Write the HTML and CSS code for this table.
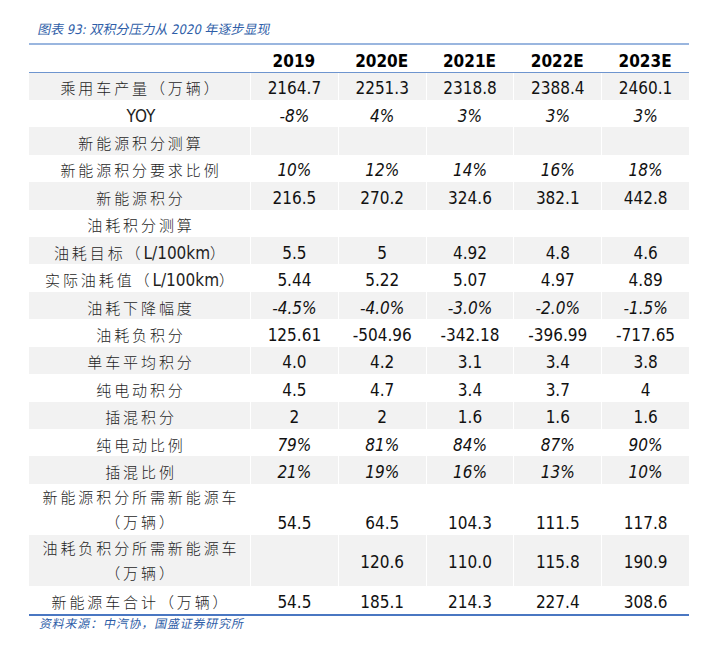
FILE: index.html
```html
<!DOCTYPE html>
<html lang="zh-CN">
<head>
<meta charset="utf-8">
<title>双积分压力从 2020 年逐步显现</title>
<link rel="stylesheet" href="styles.css">
</head>
<body>
<div class="page">
  <p class="title"><span class="slant">图表 93: 双积分压力从 2020 年逐步显现</span></p>
  <table class="data">
    <colgroup>
      <col class="label-col">
      <col class="num-col"><col class="num-col"><col class="num-col"><col class="num-col"><col class="num-col">
    </colgroup>
    <thead>
      <tr class="head">
        <th></th><th>2019</th><th>2020E</th><th>2021E</th><th>2022E</th><th>2023E</th>
      </tr>
    </thead>
    <tbody>
      <tr class="row alt"><td class="lbl">乘用车产量（万辆）</td><td>2164.7</td><td>2251.3</td><td>2318.8</td><td>2388.4</td><td>2460.1</td></tr>
      <tr class="row"><td class="lbl"><span class="lat">YOY</span></td><td class="it">-8%</td><td class="it">4%</td><td class="it">3%</td><td class="it">3%</td><td class="it">3%</td></tr>
      <tr class="row alt"><td class="lbl">新能源积分测算</td><td></td><td></td><td></td><td></td><td></td></tr>
      <tr class="row"><td class="lbl">新能源积分要求比例</td><td class="it">10%</td><td class="it">12%</td><td class="it">14%</td><td class="it">16%</td><td class="it">18%</td></tr>
      <tr class="row alt"><td class="lbl">新能源积分</td><td>216.5</td><td>270.2</td><td>324.6</td><td>382.1</td><td>442.8</td></tr>
      <tr class="row"><td class="lbl">油耗积分测算</td><td></td><td></td><td></td><td></td><td></td></tr>
      <tr class="row alt"><td class="lbl">油耗目标（<span class="lat">L/100km</span>）</td><td>5.5</td><td>5</td><td>4.92</td><td>4.8</td><td>4.6</td></tr>
      <tr class="row"><td class="lbl">实际油耗值（<span class="lat">L/100km</span>）</td><td>5.44</td><td>5.22</td><td>5.07</td><td>4.97</td><td>4.89</td></tr>
      <tr class="row alt"><td class="lbl">油耗下降幅度</td><td class="it">-4.5%</td><td class="it">-4.0%</td><td class="it">-3.0%</td><td class="it">-2.0%</td><td class="it">-1.5%</td></tr>
      <tr class="row"><td class="lbl">油耗负积分</td><td>125.61</td><td>-504.96</td><td>-342.18</td><td>-396.99</td><td>-717.65</td></tr>
      <tr class="row alt"><td class="lbl">单车平均积分</td><td>4.0</td><td>4.2</td><td>3.1</td><td>3.4</td><td>3.8</td></tr>
      <tr class="row"><td class="lbl">纯电动积分</td><td>4.5</td><td>4.7</td><td>3.4</td><td>3.7</td><td>4</td></tr>
      <tr class="row alt"><td class="lbl">插混积分</td><td>2</td><td>2</td><td>1.6</td><td>1.6</td><td>1.6</td></tr>
      <tr class="row"><td class="lbl">纯电动比例</td><td class="it">79%</td><td class="it">81%</td><td class="it">84%</td><td class="it">87%</td><td class="it">90%</td></tr>
      <tr class="row alt"><td class="lbl">插混比例</td><td class="it">21%</td><td class="it">19%</td><td class="it">16%</td><td class="it">13%</td><td class="it">10%</td></tr>
      <tr class="dbl dbl-a"><td class="lbl">新能源积分所需新能源车<br>（万辆）</td><td class="bottom">54.5</td><td class="bottom">64.5</td><td class="bottom">104.3</td><td class="bottom">111.5</td><td class="bottom">117.8</td></tr>
      <tr class="dbl dbl-b alt"><td class="lbl">油耗负积分所需新能源车<br>（万辆）</td><td></td><td>120.6</td><td>110.0</td><td>115.8</td><td>190.9</td></tr>
      <tr class="last"><td class="lbl">新能源车合计（万辆）</td><td>54.5</td><td>185.1</td><td>214.3</td><td>227.4</td><td>308.6</td></tr>
    </tbody>
  </table>
  <p class="source"><span class="slant">资料来源：中汽协，国盛证券研究所</span></p>
</div>
</body>
</html>
```
FILE: styles.css
```css
* {
  box-sizing: border-box;
}

body {
  margin: 0;
  background: #ffffff;
  color: #111111;
  font-family: "DejaVu Sans Condensed", "Noto Sans CJK SC", sans-serif;
}

.page {
  width: 704px;
  padding-left: 29px;
}

.title {
  margin: 0 0 0 9px;
  padding-top: 22px;
  height: 38px;
  line-height: 16px;
  font-size: 13px;
  color: #2f5ea8;
  font-family: "DejaVu Sans Condensed", "Noto Sans CJK SC", sans-serif;
}

.slant {
  display: inline-block;
  transform: skewX(-12deg);
  transform-origin: left center;
}

.data {
  width: 660px;
  margin-top: 5px;
  table-layout: fixed;
  border-collapse: separate;
  border-spacing: 0;
  border-top: 2px solid #9ab6df;
  border-bottom: 2px solid #4a77c2;
  font-size: 17px;
}

.label-col {
  width: 221px;
}

.num-col {
  width: 87.8px;
}

.head {
  height: 27.5px;
}

.head th {
  border-bottom: 1.5px solid #6e95cf;
  font-weight: bold;
  line-height: 20px;
  padding: 6px 0 0 0;
  vertical-align: middle;
  text-align: center;
  color: #000;
}

td {
  padding: 4px 0 0 0;
  line-height: 20px;
  text-align: center;
  vertical-align: middle;
  white-space: nowrap;
  color: #111;
  border-left: 1px solid #ffffff;
}

td.lbl {
  border-left: 0;
  font-family: "Noto Sans CJK SC", sans-serif;
  font-weight: 300;
  font-size: 15px;
  letter-spacing: 2.9px;
  padding-left: 3px;
  color: #1e1e1e;
}

.lat {
  font-family: "DejaVu Sans Condensed", sans-serif;
  font-weight: 400;
  font-size: 17px;
  letter-spacing: 0;
}

.row {
  height: 27.43px;
}

.alt td {
  background: #f2f2f2;
}

.it {
  font-style: italic;
}

.dbl-a {
  height: 49.5px;
}

.dbl-b {
  height: 50.5px;
}

.dbl td.lbl {
  line-height: 25.5px;
  padding-top: 0;
}

td.bottom {
  vertical-align: bottom;
  line-height: 23px;
  padding: 0;
}

.last {
  height: 28px;
}

.last td {
  padding-top: 5px;
}

.source {
  margin: 0 0 0 11px;
  line-height: 14px;
  font-size: 12px;
  letter-spacing: 0.8px;
  color: #2f5ea8;
  font-family: "Noto Sans CJK SC", sans-serif;
}
```
